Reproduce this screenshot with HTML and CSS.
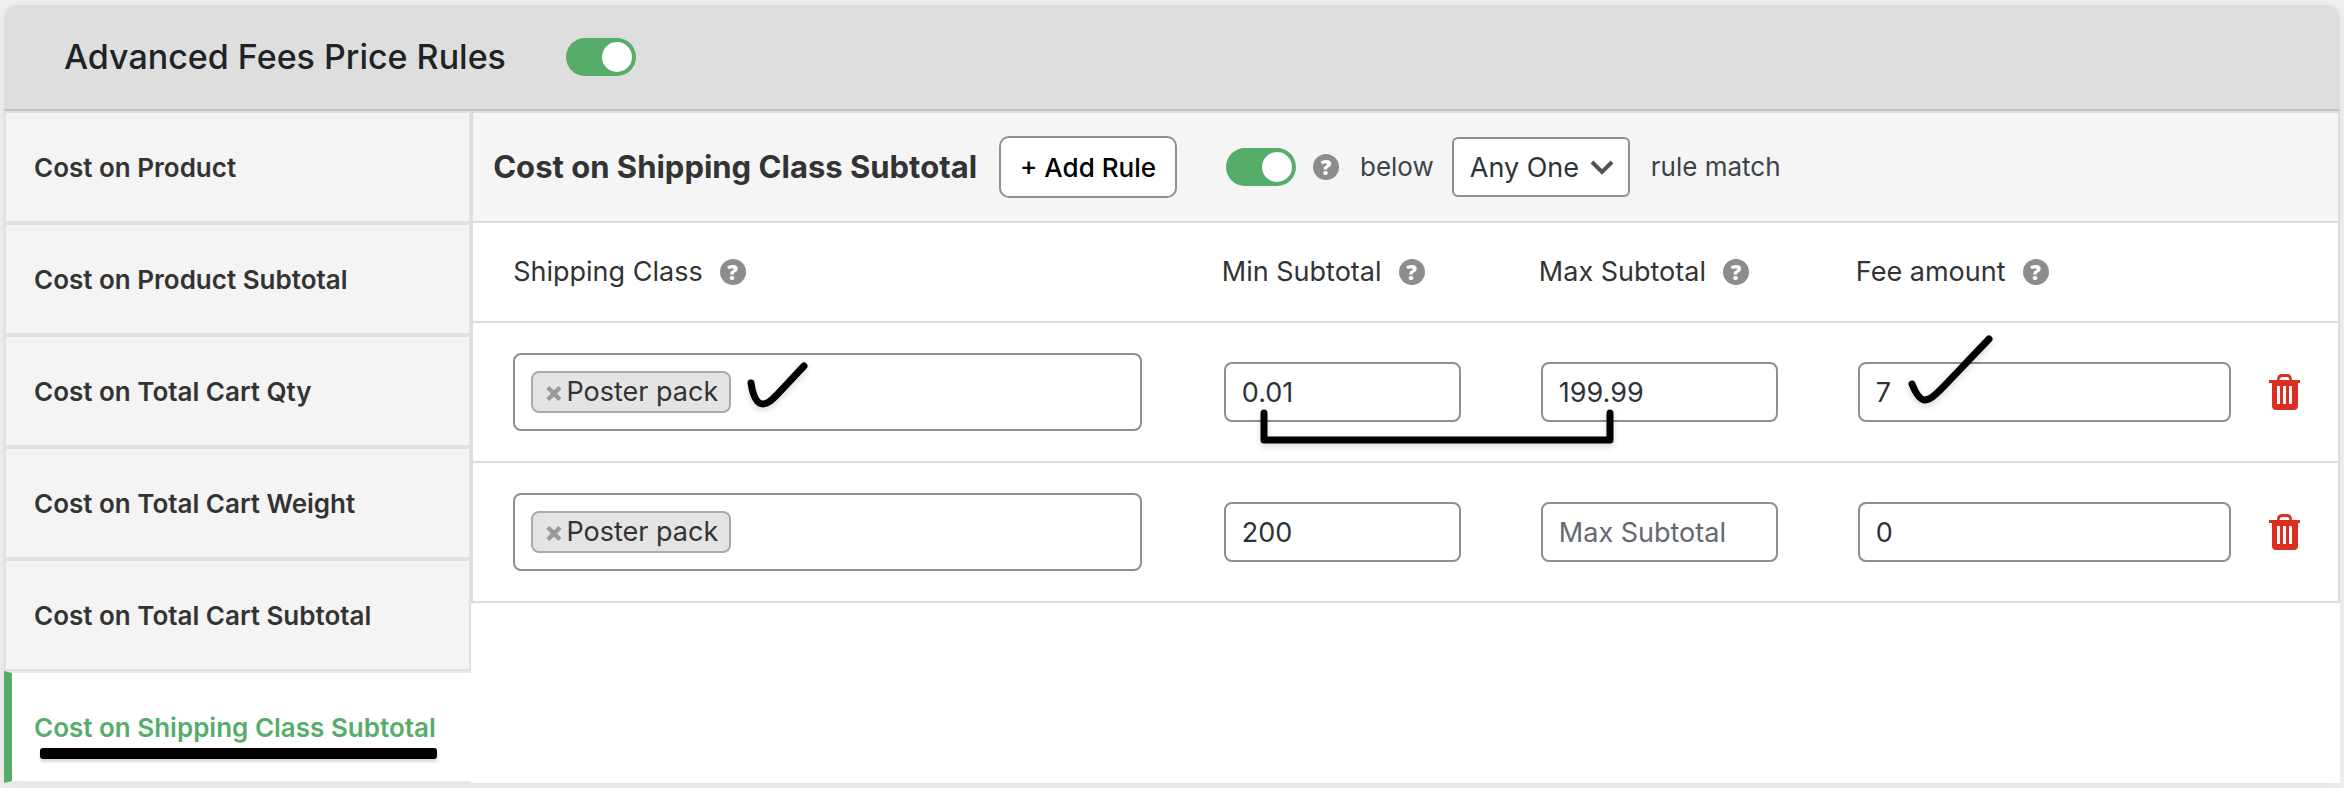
FILE: index.html
```
<!DOCTYPE html>
<html lang="en">
<head>
    <meta charset="UTF-8">
    <meta name="viewport" content="width=device-width, initial-scale=1.0">
    <title>Advanced Fees Price Rules</title>
    <link rel="stylesheet" href="styles.css">
</head>
<body>
    <div class="rules-box">
        <div class="box-header">
            <h2>Advanced Fees Price Rules</h2>
            <input type="checkbox" class="switch" aria-label="Enable price rules" checked>
        </div>
        <div class="box-body">
            <ul class="tabs">
                <li><a href="#product">Cost on Product</a></li>
                <li><a href="#product-subtotal">Cost on Product Subtotal</a></li>
                <li><a href="#cart-qty">Cost on Total Cart Qty</a></li>
                <li><a href="#cart-weight">Cost on Total Cart Weight</a></li>
                <li><a href="#cart-subtotal">Cost on Total Cart Subtotal</a></li>
                <li class="active">
                    <a href="#class-subtotal">Cost on Shipping Class Subtotal</a>
                    <span class="mark-underline"></span>
                </li>
            </ul>
            <div class="panel">
                <div class="panel-header">
                    <h3>Cost on Shipping Class Subtotal</h3>
                    <button type="button" class="add-rule">+ Add Rule</button>
                    <div class="match">
                        <input type="checkbox" class="switch" aria-label="Enable shipping class rules" checked>
                        <span class="help">?</span>
                        <label for="match_type">below</label>
                        <select id="match_type">
                            <option>Any One</option>
                            <option>All</option>
                        </select>
                        <span>rule match</span>
                    </div>
                </div>
                <table class="rules">
                    <colgroup>
                        <col class="col-class">
                        <col class="col-range">
                        <col class="col-range">
                        <col>
                        <col class="col-delete">
                    </colgroup>
                    <thead>
                        <tr>
                            <th><div class="heading">Shipping Class<span class="help">?</span></div></th>
                            <th><div class="heading">Min Subtotal<span class="help">?</span></div></th>
                            <th><div class="heading">Max Subtotal<span class="help">?</span></div></th>
                            <th colspan="2"><div class="heading">Fee amount<span class="help">?</span></div></th>
                        </tr>
                    </thead>
                    <tbody>
                        <tr>
                            <td>
                                <div class="multi-select">
                                    <span class="tag"><button type="button" aria-label="Remove">×</button>Poster pack</span>
                                    <svg class="mark mark-class" width="64" height="52" viewBox="0 0 64 52"><path d="M6 23C8 36 12 44 18 44C26 44 34 32 59 6"/></svg>
                                </div>
                            </td>
                            <td class="value">
                                <input type="text" aria-label="Min Subtotal" value="0.01">
                                <svg class="mark mark-range" width="362" height="44" viewBox="0 0 362 44"><path d="M6 6V33H352V6"/></svg>
                            </td>
                            <td class="value"><input type="text" aria-label="Max Subtotal" placeholder="Max Subtotal" value="199.99"></td>
                            <td class="value">
                                <input type="text" aria-label="Fee amount" value="7">
                                <svg class="mark mark-fee" width="90" height="76" viewBox="0 0 90 76"><path d="M6 51C10 61 14 67 19 67C27 67 33 58 83 6"/></svg>
                            </td>
                            <td>
                                <button type="button" class="delete" aria-label="Delete rule">
                                    <svg width="31" height="36" viewBox="0 0 31 36"><path d="M8 6C8 2 10 0 13 0h5c3 0 5 2 5 6h8v3h-2v23q0 4-4 4H7q-4 0-4-4V9H0V6zM10.500 6h10c0-2-1-3-3-3h-4c-2 0-3 1-3 3zM8 12v18h3V12zM14 12v18h3V12zM20 12v18h3V12z"/></svg>
                                </button>
                            </td>
                        </tr>
                        <tr>
                            <td>
                                <div class="multi-select">
                                    <span class="tag"><button type="button" aria-label="Remove">×</button>Poster pack</span>
                                </div>
                            </td>
                            <td class="value"><input type="text" aria-label="Min Subtotal" value="200"></td>
                            <td class="value"><input type="text" aria-label="Max Subtotal" placeholder="Max Subtotal"></td>
                            <td class="value"><input type="text" aria-label="Fee amount" value="0"></td>
                            <td>
                                <button type="button" class="delete" aria-label="Delete rule">
                                    <svg width="31" height="36" viewBox="0 0 31 36"><path d="M8 6C8 2 10 0 13 0h5c3 0 5 2 5 6h8v3h-2v23q0 4-4 4H7q-4 0-4-4V9H0V6zM10.500 6h10c0-2-1-3-3-3h-4c-2 0-3 1-3 3zM8 12v18h3V12zM14 12v18h3V12zM20 12v18h3V12z"/></svg>
                                </button>
                            </td>
                        </tr>
                    </tbody>
                </table>
            </div>
        </div>
    </div>
</body>
</html>
```
FILE: styles.css
```
* {
    box-sizing: border-box;
}
body {
    margin: 0;
    padding: 5px 4px;
    background-color: #f0f0f0;
    color: #333;
    font-family: Inter, "Liberation Sans", sans-serif;
    font-size: 26px;
    line-height: 38px;
}
h2,
h3 {
    margin: 0;
}
input,
select,
button {
    font-family: inherit;
    font-size: 27px;
    margin: 0;
}
.rules-box {
    background-color: #fff;
    border-radius: 12px 12px 0 0;
    box-shadow: 0 2px 16px rgba(0, 0, 0, 0.07);
}
.box-header {
    display: flex;
    align-items: center;
    gap: 60px;
    height: 106px;
    padding: 0 60px;
    background-color: #dedede;
    border-bottom: 2px solid #c3c4c7;
    border-radius: 12px 12px 0 0;
}
.box-header h2 {
    font-size: 34px;
    font-weight: 500;
    color: #1d2327;
}
.box-body {
    display: flex;
    align-items: flex-start;
}

/* toggle */
.switch {
    appearance: none;
    flex: none;
    width: 70px;
    height: 38px;
    padding: 4px;
    border-radius: 19px;
    background-color: #bbb;
    cursor: pointer;
}
.switch::before {
    content: "";
    display: block;
    width: 30px;
    height: 30px;
    border-radius: 50%;
    background-color: #fff;
}
.switch:checked {
    background-color: #56ad6a;
}
.switch:checked::before {
    margin-left: auto;
}

/* left tabs */
.tabs {
    width: 20%;
    margin: 0;
    padding: 0;
    list-style: none;
}
.tabs li {
    position: relative;
    height: 112px;
    border: 2px solid #e0e0e0;
    background-color: #f4f4f4;
}
.tabs a {
    display: flex;
    align-items: center;
    height: 100%;
    padding: 2px 0 0 28px;
    color: #333;
    font-weight: 600;
    white-space: nowrap;
    text-decoration: none;
}
.tabs .active {
    background-color: #fff;
    border-color: #e9e9e9;
    border-left: 8px solid #56ad6a;
    border-right: 0;
}
.tabs .active a {
    padding-left: 22px;
    color: #56ad6a;
}

/* right panel */
.panel {
    flex: 1;
    border: 2px solid #dcdcdc;
}
.panel-header {
    display: flex;
    align-items: center;
    height: 110px;
    padding-left: 20px;
    background-color: #f5f5f5;
    border-bottom: 2px solid #dcdcdc;
}
.panel-header h3 {
    font-size: 31px;
    font-weight: 700;
}
.add-rule {
    height: 62px;
    margin-left: 22px;
    padding: 0 19px;
    border: 2px solid #8c8f94;
    border-radius: 10px;
    background-color: #fff;
    color: #000;
    font-size: 26px;
    font-weight: 500;
    cursor: pointer;
}
.match {
    display: flex;
    align-items: center;
    margin-left: 49px;
    color: #3c434a;
}
.match label {
    margin: 0 18px 0 21px;
}
.match select {
    appearance: none;
    width: 178px;
    height: 60px;
    margin-right: 21px;
    padding: 0 16px;
    border: 2px solid #8c8f94;
    border-radius: 6px;
    background: #fff url("data:image/svg+xml,%3Csvg xmlns='http://www.w3.org/2000/svg' width='24' height='15'%3E%3Cpath d='M2 2l10 10L22 2' fill='none' stroke='%23555' stroke-width='4'/%3E%3C/svg%3E") no-repeat right 14px center;
    color: #2c3338;
}
.help {
    display: flex;
    align-items: center;
    justify-content: center;
    width: 26px;
    height: 26px;
    border-radius: 50%;
    background-color: #8c8c8c;
    color: #fff;
    font-family: "Open Sans", sans-serif;
    font-size: 21px;
    font-weight: 800;
    line-height: 26px;
}
.match .help {
    margin-left: 17px;
}

/* rules table */
.rules {
    width: 100%;
    table-layout: fixed;
    border-collapse: separate;
    border-spacing: 0;
    font-size: 27px;
}
.col-class {
    width: 38%;
}
.col-range {
    width: 17%;
}
.col-delete {
    width: 69px;
}
.rules th {
    height: 98px;
    padding: 0 0 0 40px;
    font-weight: 400;
    white-space: nowrap;
}
.heading {
    display: flex;
    align-items: center;
    gap: 17px;
}
.rules td {
    position: relative;
    height: 140px;
    padding: 0;
    border-top: 2px solid #dcdcdc;
}
.rules td:first-child {
    padding: 0 40px;
}
.rules .value {
    padding: 0 38px 0 42px;
}
.value input {
    display: block;
    width: 100%;
    height: 60px;
    padding: 0 16px;
    border: 2px solid #8c8f94;
    border-radius: 8px;
    background-color: #fff;
    color: #2c3338;
}
.value input::placeholder {
    color: #646970;
}
.multi-select {
    position: relative;
    display: flex;
    align-items: center;
    height: 78px;
    padding: 0 16px;
    border: 2px solid #8c8f94;
    border-radius: 8px;
    background-color: #fff;
}
.tag {
    display: flex;
    align-items: center;
    height: 42px;
    padding: 0 11px;
    border: 2px solid #aaa;
    border-radius: 8px;
    background-color: #e4e4e4;
}
.tag button {
    margin-right: 3px;
    padding: 0;
    border: 0;
    background: none;
    color: #999;
    font-size: 28px;
    font-weight: 800;
    cursor: pointer;
}
.delete {
    display: block;
    padding: 0;
    border: 0;
    background: none;
    cursor: pointer;
}
.delete svg {
    display: block;
    fill: #dc2f21;
    fill-rule: evenodd;
}

/* hand drawn marks */
.mark {
    position: absolute;
    z-index: 1;
    fill: none;
    stroke: #000;
    stroke-width: 7px;
    stroke-linecap: round;
    stroke-linejoin: round;
    filter: drop-shadow(0 3px 3px rgba(0, 0, 0, 0.15));
    pointer-events: none;
}
.mark-class {
    left: 230px;
    top: 5px;
}
.mark-range {
    left: 76px;
    top: 84px;
}
.mark-fee {
    left: 90px;
    top: 10px;
}
.mark-underline {
    position: absolute;
    left: 28px;
    right: 34px;
    bottom: 22px;
    height: 11px;
    border-radius: 3px;
    background-color: #000;
    box-shadow: 0 3px 3px rgba(0, 0, 0, 0.15);
}
```
